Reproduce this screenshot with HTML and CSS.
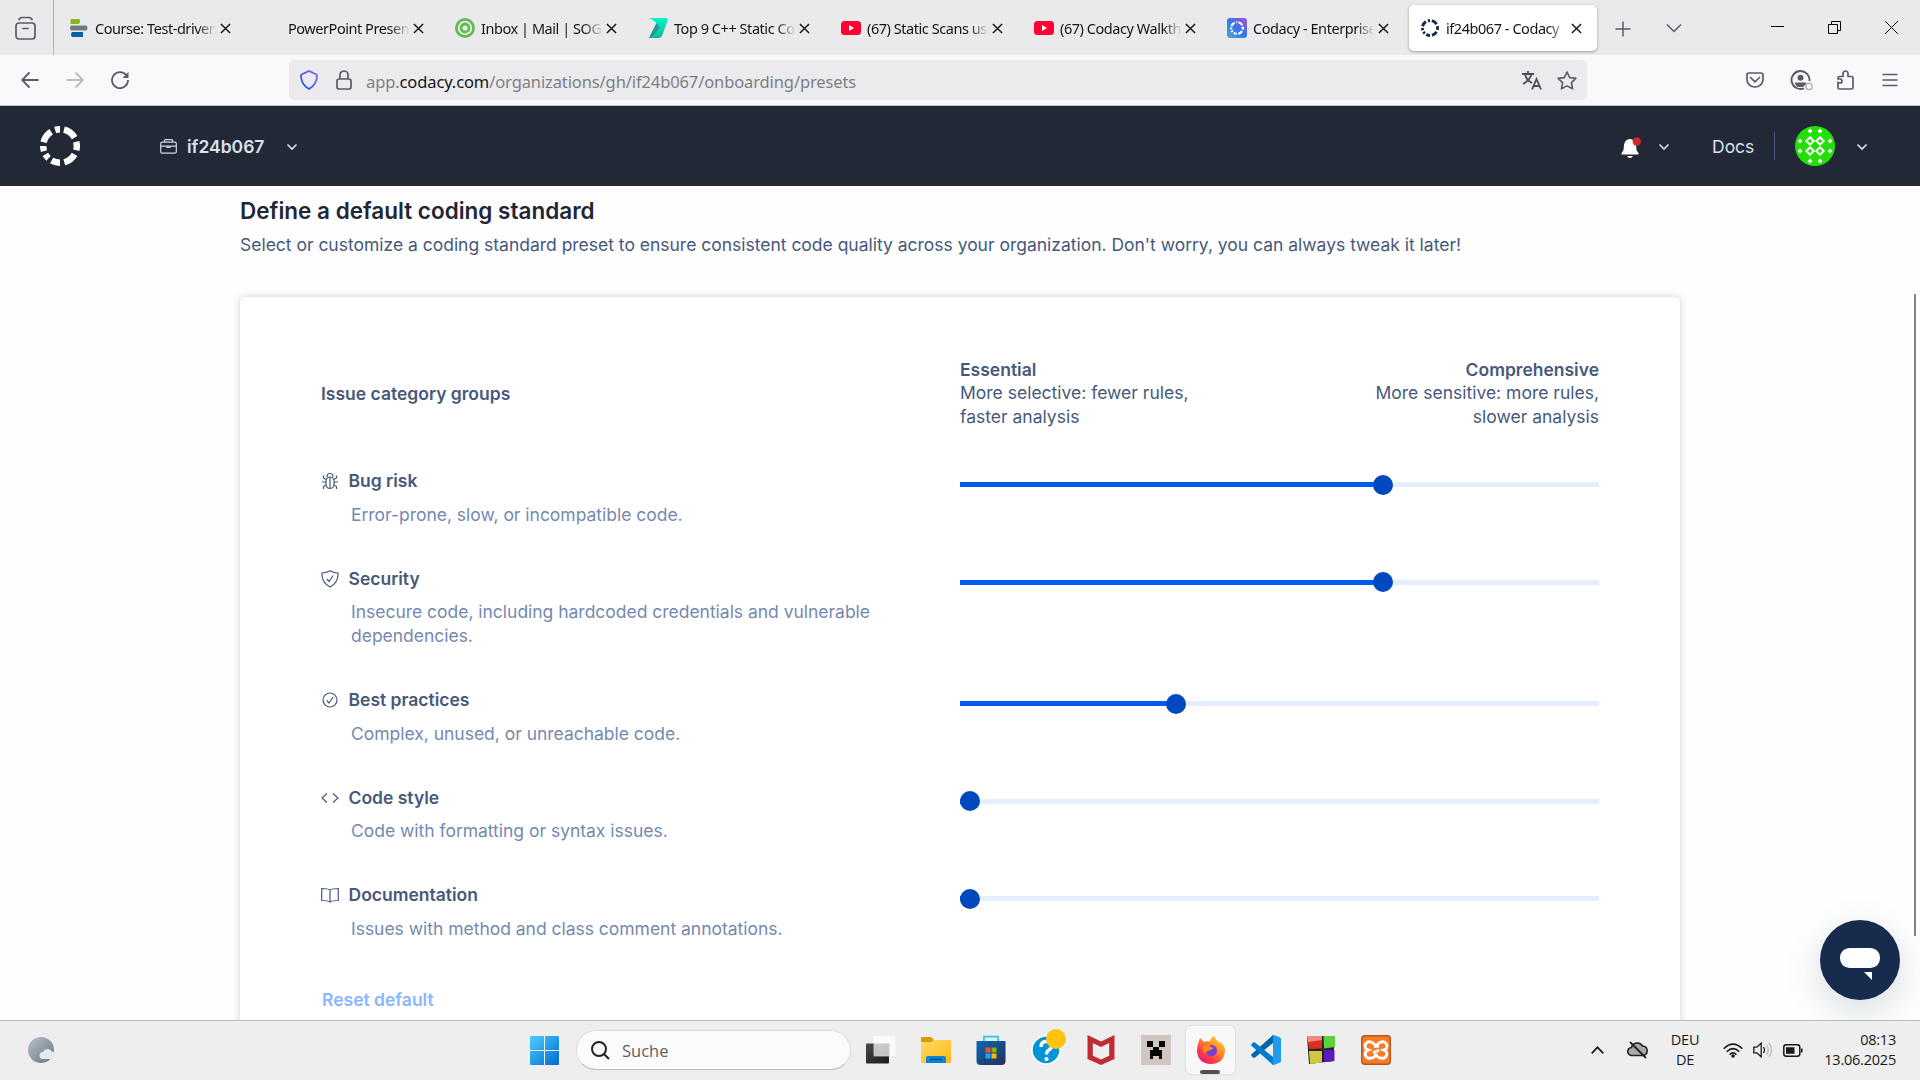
FILE: index.html
```html
<!DOCTYPE html>
<html lang="en">
<head>
<meta charset="utf-8">
<title>if24b067 - Codacy</title>
<link rel="stylesheet" href="styles.css">
</head>
<body>
<svg width="0" height="0" class="defs">
  <defs>
    <symbol id="ring" viewBox="0 0 40 40"><circle cx="20" cy="20" r="16.8" fill="none" stroke="currentColor" stroke-width="6.4" pathLength="360" stroke-dasharray="0 14 46 15 30 15 45 15 30 13 17 12 18 13 45 15 17" transform="rotate(-90 20 20)"/></symbol>
    <symbol id="x" viewBox="0 0 12 12"><path d="M1 1l10 10M11 1L1 11" stroke="currentColor" stroke-width="1.6" fill="none"/></symbol>
    <symbol id="down" viewBox="0 0 12 8"><path d="M1.5 1.5L6 6l4.500-4.500" stroke="currentColor" stroke-width="1.600" fill="none"/></symbol>
    <symbol id="yt" viewBox="0 0 20 20"><rect y="3" width="20" height="14" rx="3.500" fill="#ff0033"/><path d="M8 7l5 3-5 3z" fill="#fff"/></symbol>
    <linearGradient id="blue" x1="0" y1="0" x2="1" y2="1"><stop offset="0" stop-color="#4cd0ff"/><stop offset="1" stop-color="#0069cf"/></linearGradient>
    <linearGradient id="teal" x1="0" y1="0" x2="0" y2="1"><stop offset="0" stop-color="#00f5c4"/><stop offset="1" stop-color="#16b89a"/></linearGradient>
    <linearGradient id="cod" x1="1" y1="0" x2="0" y2="1"><stop offset="0" stop-color="#a352c8"/><stop offset=".5" stop-color="#3577f0"/><stop offset="1" stop-color="#48a8c8"/></linearGradient>
    <linearGradient id="shield" x1="1" y1="0" x2="0" y2="1"><stop offset="0" stop-color="#9059ff"/><stop offset="1" stop-color="#0250d8"/></linearGradient>
    <linearGradient id="store" x1="0" y1="0" x2="1" y2="1"><stop offset="0" stop-color="#0a67b5"/><stop offset="1" stop-color="#263058"/></linearGradient>
    <linearGradient id="folder" x1="0" y1="0" x2="1" y2="1"><stop offset="0" stop-color="#ffdc6a"/><stop offset="1" stop-color="#fdb813"/></linearGradient>
    <linearGradient id="fox" x1="1" y1="0" x2="0.200" y2="1"><stop offset="0" stop-color="#ffe63b"/><stop offset=".4" stop-color="#ff9322"/><stop offset=".75" stop-color="#ff3a46"/><stop offset="1" stop-color="#e0158a"/></linearGradient>
    <linearGradient id="moon" x1="0" y1="0" x2="1" y2="1"><stop offset="0" stop-color="#b6c3cf"/><stop offset="1" stop-color="#6c747c"/></linearGradient>
    <linearGradient id="dark" x1="0" y1="0" x2="1" y2="1"><stop offset="0" stop-color="#484848"/><stop offset="1" stop-color="#1c1c1c"/></linearGradient>
  </defs>
</svg>

<div class="tabbar">
  <div class="archive"><svg width="21" height="24" viewBox="0 0 21 24" fill="none" stroke="#5b5b66" stroke-width="1.700"><rect x="1" y="7" width="19" height="16" rx="3"/><path d="M4 3.500q1-2 3-2h7q2 0 3 2M8 12.500h5" stroke-linecap="round"/></svg></div>
  <div class="tabs">
    <div class="tab"><svg class="fav" viewBox="0 0 20 20"><path d="M2 1h8q1 0 1 2t-1 3H1q1-1 .500-2.500Q1 2 2 1z" fill="#84b819"/><path d="M2 7.500h15q1.500 0 1.500 2.500t-1.500 2.500H2q-2-2.500 0-5z" fill="#6f7c85"/><path d="M3 14h11v5H3q-2-2.500 0-5z" fill="#00659c"/></svg><span class="label">Course: Test-driven</span><svg class="close"><use href="#x"/></svg></div>
    <div class="tab"><span class="fav"></span><span class="label">PowerPoint Present</span><svg class="close"><use href="#x"/></svg></div>
    <div class="tab"><svg class="fav" viewBox="0 0 20 20" fill="none" stroke="#62bd4e"><circle cx="10" cy="10" r="8.600" stroke-width="2.800"/><circle cx="10" cy="10" r="4" stroke-width="2.800"/></svg><span class="label">Inbox | Mail | SOGo</span><svg class="close"><use href="#x"/></svg></div>
    <div class="tab"><svg class="fav" viewBox="0 0 20 20"><path d="M1 0h17q2 0 1.500 3L14 18q-1 2-3 2H1L8.500 5Q5 1.500 1 0z" fill="url(#teal)"/><path d="M8.500 5q3 2 3 5l-6 7-4.500 3z" fill="#2b8596" opacity=".75"/></svg><span class="label">Top 9 C++ Static Co</span><svg class="close"><use href="#x"/></svg></div>
    <div class="tab"><svg class="fav"><use href="#yt"/></svg><span class="label">(67) Static Scans usi</span><svg class="close"><use href="#x"/></svg></div>
    <div class="tab"><svg class="fav"><use href="#yt"/></svg><span class="label">(67) Codacy Walkth</span><svg class="close"><use href="#x"/></svg></div>
    <div class="tab"><svg class="fav" viewBox="0 0 20 20" color="#fff"><rect width="20" height="20" rx="3" fill="url(#cod)"/><use href="#ring" x="3" y="3" width="14" height="14"/></svg><span class="label">Codacy - Enterprise</span><svg class="close"><use href="#x"/></svg></div>
    <div class="tab active"><svg class="fav" viewBox="0 0 20 20" color="#172b4d"><use href="#ring" x="1" y="1" width="18" height="18"/></svg><span class="label">if24b067 - Codacy</span><svg class="close"><use href="#x"/></svg></div>
  </div>
  <div class="cell new"><svg width="16" height="16" viewBox="0 0 16 16" stroke="#5b5b66" stroke-width="1.500"><path d="M8 .5v15M.5 8h15"/></svg></div>
  <div class="cell list"><svg width="16" height="10" viewBox="0 0 16 10" fill="none" stroke="#5b5b66" stroke-width="1.500"><path d="M1 1.500l7 7 7-7"/></svg></div>
  <div class="wincontrols">
    <div class="cell"><svg width="13" height="13" viewBox="0 0 13 13"><path d="M0 5.500h13" stroke="#000"/></svg></div>
    <div class="cell"><svg width="13" height="13" viewBox="0 0 13 13" fill="none" stroke="#000"><path d="M.5 3.500h9v9h-9zM3.500 3.500v-3h9v9h-3"/></svg></div>
    <div class="cell"><svg width="13" height="13" viewBox="0 0 13 13" stroke="#000"><path d="M0 0l13 13M13 0L0 13"/></svg></div>
  </div>
</div>

<div class="toolbar">
  <div class="nav">
    <svg width="18" height="16" viewBox="0 0 18 16" fill="none" stroke="#5b5b66" stroke-width="1.800" stroke-linecap="round"><path d="M17 8H1.500M8 1L1.200 8 8 15"/></svg>
    <svg width="18" height="16" viewBox="0 0 18 16" fill="none" stroke="#bdbdc2" stroke-width="1.800" stroke-linecap="round"><path d="M1 8h15.500M10 1l6.800 7L10 15"/></svg>
    <svg width="18" height="18" viewBox="0 0 18 18" fill="none" stroke="#5b5b66" stroke-width="1.800"><path d="M15.500 4.500A8 8 0 1 0 17 9"/><path d="M17.500 1v6h-6z" fill="#5b5b66" stroke="none"/></svg>
  </div>
  <div class="urlbar">
    <svg width="18" height="20" viewBox="0 0 18 20" fill="none" stroke="url(#shield)" stroke-width="1.700"><path d="M9 1l7 3.200q1.200.6 1.100 1.800Q16.500 15 9 19 1.500 15 .9 6 .8 4.800 2 4.200z"/></svg>
    <svg class="lock" width="16" height="20" viewBox="0 0 16 20" fill="none" stroke="#5b5b66" stroke-width="1.700"><rect x="1" y="9" width="14" height="10" rx="2"/><path d="M4 9V5a4 4 0 0 1 8 0v4"/></svg>
    <span class="url">app.<b>codacy.com</b>/organizations/gh/if24b067/onboarding/presets</span>
    <svg width="20" height="19" viewBox="0 0 20 19" fill="none" stroke="#4d4d57" stroke-width="1.800"><path d="M0 3h12M6 0v3M3 3q1 6 7 9M9.500 3Q8 9 1 13M10 18.500L14.500 8 19 18.500M11.500 15h6"/></svg>
    <svg class="star" width="20" height="19" viewBox="0 0 20 19" fill="none" stroke="#5b5b66" stroke-width="1.600" stroke-linejoin="round"><path d="M10 1l2.700 5.600 6.200.8-4.500 4.200 1.200 6.200L10 14.900l-5.600 2.900 1.200-6.200L1.100 7.400l6.200-.8z"/></svg>
  </div>
  <div class="extras">
    <svg width="18" height="16" viewBox="0 0 18 16" fill="none" stroke="#5b5b66" stroke-width="1.700"><path d="M3 1h12q2 0 2 2v4.500a8 7.500 0 0 1-16 0V3q0-2 2-2z"/><path d="M4.500 5.500L9 9.800l4.500-4.300" stroke-linecap="round"/></svg>
    <svg width="23" height="21" viewBox="0 0 23 21" fill="none" stroke="#5b5b66" stroke-width="1.900"><path d="M14 18.300A9 9 0 1 1 19.500 11"/><circle cx="10.500" cy="7.800" r="3" fill="#5b5b66" stroke="none"/><path d="M5 12.500h11v1.500l-3 3H8q-3-1.500-3-4.500z" fill="#5b5b66" stroke="none"/><circle cx="19" cy="16.500" r="3.200" stroke="#b5b5ba" stroke-width="1.500"/></svg>
    <svg class="puzzle" width="17" height="20" viewBox="0 0 17 20" fill="none" stroke="#5b5b66" stroke-width="1.700" stroke-linejoin="round"><path d="M1 12v5.500Q1 19 2.500 19h12q1.500 0 1.500-1.500V8q0-1.500-1.500-1.500H11V3.500a2.500 2.500 0 0 0-5 0v3H2.500Q1 6.500 1 8v1h2a2 2 0 0 1 0 4H1z"/></svg>
    <svg width="16" height="14" viewBox="0 0 16 14" stroke="#5b5b66" stroke-width="1.600"><path d="M.5 1.500h15M.5 7h15M.5 12.500h15"/></svg>
  </div>
</div>

<header class="header">
  <svg class="logo"><use href="#ring"/></svg>
  <svg class="case" width="17" height="15" viewBox="0 0 17 15" fill="none" stroke="#cfd7e6" stroke-width="1.200"><rect x=".7" y="3.200" width="15.600" height="11" rx="1.500"/><path d="M4.500 3V1.500Q4.500.7 5.500.7h6q1 0 1 .8V3M.7 7.200h15.600M7 7.200v1.300h3V7.200"/></svg>
  <span class="org">if24b067</span>
  <svg class="chev"><use href="#down"/></svg>
  <span class="spacer"></span>
  <svg class="bell" width="21" height="21" viewBox="0 0 21 21"><path d="M9 2q5 .5 6 6 .3 5 1 6l1.500 2v1.500H.5V16L2 14q.7-1 1-6 .8-5.500 6-6zM6 19h6q-1 2-3 2t-3-2z" fill="#fff"/><circle cx="15.800" cy="4.500" r="4.200" fill="#cf2a2a"/></svg>
  <svg class="chev"><use href="#down"/></svg>
  <span class="docs">Docs</span>
  <svg class="avatar" viewBox="0 0 40 40"><circle cx="20" cy="20" r="20" fill="#22e006"/><path d="M15 2.500L17.500 5 15 7.500 12.500 5zM25 2.500L27.500 5 25 7.500 22.500 5zM5 12.500L7.500 15 5 17.500 2.500 15zM35 12.500l2.500 2.500-2.500 2.500-2.500-2.500zM5 22.500L7.500 25 5 27.500 2.500 25zM35 22.500l2.500 2.500-2.500 2.500-2.500-2.500zM15 32.500l2.500 2.500-2.500 2.500-2.500-2.500zM25 32.500l2.500 2.500-2.500 2.500-2.500-2.500z" fill="#fff"/><path d="M15 11.300l3.700 3.700-3.700 3.700-3.700-3.700zM25 11.300l3.700 3.700-3.700 3.700-3.700-3.700zM15 21.300l3.700 3.700-3.700 3.700-3.700-3.700zM25 21.300l3.700 3.700-3.700 3.700-3.700-3.700z" fill="none" stroke="#fff" stroke-width="2"/></svg>
  <svg class="chev last"><use href="#down"/></svg>
</header>

<main class="page">
  <h1>Define a default coding standard</h1>
  <p class="lead">Select or customize a coding standard preset to ensure consistent code quality across your organization. Don't worry, you can always tweak it later!</p>
  <section class="card">
    <div class="row head">
      <strong class="groups">Issue category groups</strong>
      <div class="ends">
        <p><strong>Essential</strong><br>More selective: fewer rules,<br>faster analysis</p>
        <p class="right"><strong>Comprehensive</strong><br>More sensitive: more rules,<br>slower analysis</p>
      </div>
    </div>
    <div class="row">
      <div class="info">
        <h2><svg viewBox="0 0 18 18"><rect x="5" y="5" width="8" height="11.500" rx="4"/><path d="M6 5q0-3.500 3-3.500T12 5M9 5v11M1 10h4M13 10h4M2.500 3.500V6L5 7.500M15.500 3.500V6L13 7.500M2.500 17v-2.500L5 13M15.500 17v-2.500L13 13"/></svg>Bug risk</h2>
        <p>Error-prone, slow, or incompatible code.</p>
      </div>
      <div class="slider"><div class="fill" style="width:66.150%"></div><div class="thumb"></div></div>
    </div>
    <div class="row">
      <div class="info">
        <h2><svg viewBox="0 0 18 18"><path d="M9 .8Q12.500 3 17 3q.5 10-8 14Q.5 13 1 3q4.500 0 8-2.200zM5.800 9l2.300 2.500 4-6"/></svg>Security</h2>
        <p>Insecure code, including hardcoded credentials and vulnerable dependencies.</p>
      </div>
      <div class="slider"><div class="fill" style="width:66.150%"></div><div class="thumb"></div></div>
    </div>
    <div class="row">
      <div class="info">
        <h2><svg viewBox="0 0 18 18"><circle cx="9" cy="9" r="7"/><path d="M5.800 9.500L8 12l4-6"/></svg>Best practices</h2>
        <p>Complex, unused, or unreachable code.</p>
      </div>
      <div class="slider"><div class="fill" style="width:33.800%"></div><div class="thumb"></div></div>
    </div>
    <div class="row">
      <div class="info">
        <h2><svg viewBox="0 0 18 18"><path d="M6 4.500L1 9l5 4.500M12 4.500L17 9l-5 4.500"/></svg>Code style</h2>
        <p>Code with formatting or syntax issues.</p>
      </div>
      <div class="slider"><div class="fill" style="width:1.560%"></div><div class="thumb"></div></div>
    </div>
    <div class="row">
      <div class="info">
        <h2><svg viewBox="0 0 18 18"><path d="M9 4Q7 2.500.7 2.500v12Q7 14.500 9 16q2-1.500 8.300-1.500v-12Q11 2.500 9 4zM9 4v12.500"/></svg>Documentation</h2>
        <p>Issues with method and class comment annotations.</p>
      </div>
      <div class="slider"><div class="fill" style="width:1.560%"></div><div class="thumb"></div></div>
    </div>
    <div class="reset">Reset default</div>
  </section>
  <div class="scrollbar"></div>
  <div class="chat"><svg width="40" height="32" viewBox="0 0 40 32" fill="#fff"><rect width="40" height="20" rx="9.500"/><path d="M24 24h8v8z"/></svg></div>
</main>

<footer class="taskbar">
  <svg class="weather" width="28" height="26" viewBox="0 0 28 26"><circle cx="13" cy="13" r="13" fill="url(#moon)"/><path d="M15 22a3.500 3.500 0 0 1 0-7 5 5 0 0 1 9-.5 3.800 3.800 0 0 1 0 7.500z" fill="#e3e9ee"/></svg>
  <svg class="start" width="29" height="29" viewBox="0 0 29 29" fill="url(#blue)"><path d="M1 0h13v14H0V1q0-1 1-1zM15 0h13q1 0 1 1v13H15zM0 15h14v14H1q-1 0-1-1zM15 15h14v13q0 1-1 1H15z"/></svg>
  <div class="search"><svg width="19" height="19" viewBox="0 0 19 19" fill="none" stroke="#222" stroke-width="2"><circle cx="8" cy="8" r="7"/><path d="M13 13l5 5"/></svg><span>Suche</span></div>
  <div class="apps">
    <div class="app"><svg viewBox="0 0 30 30"><rect y="8.500" width="23" height="20" rx="1" fill="url(#dark)"/><rect x="7.500" y="1" width="22" height="20" rx="1" fill="#fff" opacity=".72"/><path d="M23 8.500V21H7.500" fill="none" stroke="#ccc" stroke-width=".8"/></svg></div>
    <div class="app"><svg viewBox="0 0 30 30"><path d="M0 3q0-1 1-1h9l3 3v5H0z" fill="#dd9a00"/><path d="M0 7h10l3-2h16q1 0 1 1v21q0 1-1 1H1q-1 0-1-1z" fill="url(#folder)"/><path d="M5 28v-5q0-2 2-2h16q2 0 2 2v5z" fill="#0f84d2"/><path d="M9 24.500h12" stroke="#0a4e94" stroke-width="1.300"/></svg></div>
    <div class="app"><svg viewBox="0 0 30 30"><path d="M8 7V1.700h14V7" fill="none" stroke="#2cc4f2" stroke-width="1.800"/><path d="M.5 6H29.500v20q0 4-4 4H4.500q-4 0-4-4z" fill="url(#store)"/><path d="M9.500 12.500h5v5h-5z" fill="#f25022"/><path d="M15.500 12.500h5v5h-5z" fill="#7fba00"/><path d="M9.500 18.500h5v5h-5z" fill="#1da7f0"/><path d="M15.500 18.500h5v5h-5z" fill="#ffb900"/></svg></div>
    <div class="app badge"><svg viewBox="0 0 30 30"><circle cx="15" cy="15" r="14" fill="#0095d9" stroke="#fff" stroke-width="1.500"/><path d="M10 12q0-5.500 5.200-5.500T20.500 11q0 2.500-2.800 4.200-2.200 1.300-2.200 4.300" fill="none" stroke="#fff" stroke-width="3.300"/><circle cx="15.500" cy="24" r="2.100" fill="#fff"/></svg></div>
    <div class="app"><svg viewBox="0 0 30 30"><path d="M1.500 0L15 6.500 28.500 0v24L15 30 1.500 24zM6.800 8v12.800L15 24.500l8.200-3.700V8L15 12z" fill="#c12c30" fill-rule="evenodd"/></svg></div>
    <div class="app"><svg viewBox="0 0 30 30"><path d="M0 0h30v30H0z" fill="#d1c5c1"/><path d="M6 6h6v6H6zM18 6h6v6h-6zM12 12h6v3h3v9h-3v-3h-6v3H9v-9h3z" fill="#000"/></svg></div>
    <div class="app current"><svg viewBox="0 0 30 30"><path d="M2.500 7.500L4 3l4 4q2-1 4-1l2 1q0-4 4.500-6 .5 4 4 5.500 1 1 1.500 2l.5-1.500Q29 11 29 16q-1 12.500-14 13Q2 28.500 1 16q0-5 1.500-8.500z" fill="url(#fox)"/><circle cx="15.500" cy="15.500" r="5.500" fill="#7041d8"/><path d="M7 11q5-2 8 1l3 1-4 2.500q-4 0-4 3Q5 17 7 11z" fill="#ff8a1f"/></svg></div>
    <div class="app"><svg viewBox="0 0 30 30"><path d="M22 0v8L4 22.500q-1 .5-2 0l-1.500-1.700q-.7-.8 0-1.600z" fill="#0065a9"/><path d="M22 30v-8L4 7.500q-1-.5-2 0L.5 9.200q-.7.8 0 1.600z" fill="#007acc"/><path d="M21 0q1-.3 2 0l6 2.500q1 .5 1 1.500v22q0 1-1 1.500L23 30q-1 .3-2 0l1-2V2z" fill="#1f9cf0"/></svg></div>
    <div class="app"><svg viewBox="0 0 30 30"><path d="M1 1l27 0v25L3 29z" fill="#222"/><path d="M1 1l15 0v12.500L3 14z" fill="#de2f27"/><path d="M1 1h15v4L2 7z" fill="#f08a80"/><path d="M17.500 1H29V12l-11 1.500z" fill="#5bd041"/><path d="M3 16h13v11.500L4 29z" fill="#cfc83d"/><path d="M18 15h10.500v11L18 27z" fill="#5a1bb8"/></svg></div>
    <div class="app"><svg viewBox="0 0 30 30"><rect x=".7" y=".7" width="28.600" height="28.600" rx="3" fill="#fb7a24" stroke="#b8561a" stroke-width="1.400"/><path d="M9.500 7a4 4 0 0 0-2.500 8 4 4 0 0 0 3 8q4 0 5-4 1 4 5 4a4 4 0 0 0 3-8 4 4 0 0 0-2.500-8q-2 0-4.500 3h-2q-2.500-3-4.500-3zM13 11.500l5-.5M12 18l6-3" fill="none" stroke="#fff" stroke-width="3"/></svg></div>
  </div>
  <div class="tray">
    <svg class="up" width="13" height="8" viewBox="0 0 13 8" fill="none" stroke="#1a1a1a" stroke-width="1.700"><path d="M.7 7.300l5.800-6 5.800 6"/></svg>
    <svg class="cloud" width="21" height="18" viewBox="0 0 21 18"><path d="M5 14.500a4 4 0 0 1-.5-8A6 6 0 0 1 15.500 5a4.800 4.800 0 0 1 .8 9.500z" fill="#aaa" stroke="#222" stroke-width="1.600"/><path d="M3 1l16 16" stroke="#222" stroke-width="1.800"/></svg>
    <div class="lang">DEU<br>DE</div>
    <svg class="wifi" width="20" height="15" viewBox="0 0 20 15" fill="none" stroke="#1a1a1a" stroke-width="1.500"><path d="M.7 5.800q9.300-9.300 18.600 0M3.700 8.800q6.300-6.300 12.600 0M6.600 11.600q3.400-3.400 6.800 0"/><circle cx="10" cy="13" r="1.800" fill="#1a1a1a" stroke="none"/></svg>
    <svg class="vol" width="20" height="16" viewBox="0 0 20 16" fill="none" stroke="#1a1a1a" stroke-width="1.300"><path d="M.8 5.200h3L8.200 1.200v13.600l-4.400-4h-3zM10.500 5q2 3 0 6"/><path d="M13.500 3q3.500 5 0 10M16 .8q5 7.200 0 14.400" stroke="#bbb"/></svg>
    <svg class="bat" width="20" height="13" viewBox="0 0 20 13" fill="none" stroke="#1a1a1a" stroke-width="1.500"><rect x=".8" y=".8" width="16" height="11.400" rx="2.500"/><path d="M3 3.200h8.500v6.600H3zM18 4.500h1.500v4H18z" fill="#1a1a1a" stroke="none"/></svg>
    <div class="clock">08:13<br>13.06.2025</div>
  </div>
</footer>
</body>
</html>
```
FILE: styles.css
```css
* { box-sizing: border-box; }
body {
  margin: 0;
  width: 1920px;
  height: 1080px;
  overflow: hidden;
  display: flex;
  flex-direction: column;
  font-family: Inter, sans-serif;
  font-size: 17.500px;
  color: #47597b;
  background: #fff;
}
svg { display: block; flex: none; }
p, h1, h2 { margin: 0; }
.defs { position: absolute; }
.cell { display: flex; align-items: center; justify-content: center; }

/* Browser tabs */
.tabbar {
  height: 55px;
  flex: none;
  display: flex;
  background: #eaeaec;
  color: #15141a;
  font-family: "Noto Sans", "Open Sans", sans-serif;
}
.archive {
  width: 54px;
  padding-left: 15px;
  display: flex;
  align-items: center;
  border-right: 1px solid #b4b4b8;
}
.tabs { display: flex; gap: 5px; padding: 5px 0 4px 4px; }
.tab {
  width: 188px;
  height: 46px;
  padding-left: 11px;
  display: flex;
  align-items: center;
  border-radius: 5px;
}
.tab.active { background: #fff; box-shadow: 0 1px 3px rgba(0, 0, 0, .35); }
.fav { width: 20px; height: 20px; flex: none; }
.label {
  width: 122px;
  margin-left: 6px;
  overflow: hidden;
  white-space: nowrap;
  font-size: 14.500px;
  letter-spacing: -.45px;
  line-height: 24px;
  -webkit-mask-image: linear-gradient(to right, #000 84%, transparent);
  mask-image: linear-gradient(to right, #000 84%, transparent);
}
.close { width: 11px; height: 11px; margin-left: 3px; }
.new { width: 52px; margin-top: 2px; }
.list { width: 49px; }
.wincontrols { display: flex; margin-left: auto; }
.wincontrols .cell { width: 57px; }

/* Navigation toolbar */
.toolbar {
  height: 51px;
  flex: none;
  display: flex;
  align-items: center;
  background: #f9f9fb;
  border-bottom: 1px solid #c5c5c9;
}
.nav { width: 289px; padding-left: 21px; display: flex; align-items: center; gap: 27px; }
.urlbar {
  width: 1298px;
  height: 40px;
  padding: 0 10px 0 11px;
  display: flex;
  align-items: center;
  border-radius: 5px;
  background: #ebebed;
}
.lock { margin-left: 18px; }
.url {
  flex: 1;
  margin-left: 14px;
  padding-top: 3px;
  font-family: "Noto Sans", "Open Sans", sans-serif;
  font-size: 16.500px;
  letter-spacing: -.110px;
  color: #7e7e85;
}
.url b { font-weight: 400; color: #15141a; }
.star { margin-left: 15px; }
.extras { flex: 1; padding: 0 22px 0 159px; display: flex; align-items: center; justify-content: space-between; }
.puzzle { margin: 0 2px 0 -2px; }

/* Application header */
.header {
  height: 80px;
  flex: none;
  padding-left: 40px;
  display: flex;
  align-items: center;
  background: #222836;
  color: #d9e1f0;
}
.logo { width: 40px; height: 40px; color: #fff; }
.case { margin-left: 80px; }
.org { width: 99px; margin-left: 10px; font-weight: 600; }
.chev { width: 12px; height: 8px; margin-top: 2px; }
.spacer { flex: 1; }
.bell { margin-right: 16px; margin-top: 3px; }
.docs {
  height: 28px;
  width: 63px;
  margin-left: 42px;
  border-right: 1px solid #465980;
  line-height: 29px;
}
.avatar { width: 40px; height: 40px; margin-left: 20px; }
.last { margin: 2px 52px 0 21px; }

/* Page */
.page {
  position: relative;
  flex: 1;
  min-height: 0;
  overflow: hidden;
  padding: 10px 240px 0;
  background: #fefefe;
}
h1 {
  font-size: 22.500px;
  line-height: 30px;
  font-weight: 600;
  color: #1f2636;
}
.lead { margin-top: 7px; line-height: 24px; white-space: nowrap; letter-spacing: -.013px; }
.card {
  margin-top: 40px;
  height: 800px;
  padding: 61px 81px 0;
  background: #fff;
  border-radius: 5px;
  box-shadow: 0 0 6px 1px rgba(60, 75, 125, .2);
}
.row { display: grid; grid-template-columns: 639px 639px; margin-bottom: 30px; line-height: 24px; }
.row.head { height: 72px; margin-bottom: 39px; align-items: center; }
.ends { display: flex; justify-content: space-between; margin-top: -2px; line-height: 23.600px; }
.right { text-align: right; }
strong { font-weight: 600; }
.info h2 {
  display: flex;
  align-items: center;
  gap: 9.500px;
  font-size: 17.500px;
  line-height: 24px;
  font-weight: 600;
}
.info h2 svg {
  width: 18px;
  height: 18px;
  fill: none;
  stroke: #47597b;
  stroke-width: 1.200;
}
.info p { width: 540px; margin: 9.500px 0 0 30px; padding-bottom: 10px; color: #7589b0; letter-spacing: -.020px; }
.slider { height: 5px; margin-top: 13px; display: flex; align-items: center; background: #e4eeff; }
.fill { height: 5px; background: #005cf0; }
.thumb { width: 20px; height: 20px; margin-left: -10px; border-radius: 50%; background: #0048bd; flex: none; }
.reset { margin-top: 37px; padding-left: 1px; line-height: 24px; font-weight: 600; color: #8ab6ff; }
.scrollbar { position: absolute; right: 4px; top: 108px; width: 2px; height: 642px; background: #858585; }
.chat {
  position: absolute;
  right: 20px;
  bottom: 20px;
  width: 80px;
  height: 80px;
  padding: 28px 20px;
  border-radius: 50%;
  background: #172b4d;
  box-shadow: 0 12px 36px rgba(50, 90, 90, .2);
}

/* Windows taskbar */
.taskbar {
  height: 60px;
  flex: none;
  padding-bottom: 1px;
  display: flex;
  align-items: center;
  background: #eeeeee;
  border-top: 1px solid #b9b9b9;
  font-family: "Open Sans", "Noto Sans", sans-serif;
  color: #1a1a1a;
}
.weather { margin-left: 28px; }
.start { margin-left: 474px; }
.search {
  width: 275px;
  height: 40px;
  margin-left: 17px;
  padding-left: 14px;
  display: flex;
  align-items: center;
  gap: 12px;
  border: 1px solid #dcdcdc;
  border-bottom-color: #bebebe;
  border-radius: 20px;
  background: #fbfbfb;
  font-size: 16.500px;
  color: #606060;
}
.apps { display: flex; margin-left: 2px; }
.app { width: 55px; height: 48px; display: flex; align-items: center; justify-content: center; }
.app svg { width: 30px; height: 30px; }
.badge { position: relative; }
.badge::after {
  content: "";
  position: absolute;
  left: 28px;
  top: 3px;
  width: 20px;
  height: 20px;
  border-radius: 50%;
  background: #ffc20e;
}
.current {
  position: relative;
  width: 49px;
  margin: 0 3px;
  border-radius: 5px;
  background: #f8f8f8;
  box-shadow: 0 0 2px rgba(0, 0, 0, .2);
}
.current::after {
  content: "";
  position: absolute;
  left: 14px;
  bottom: 0;
  width: 20px;
  height: 4px;
  border-radius: 2px;
  background: #505050;
}
.tray { margin-left: auto; padding-right: 24px; display: flex; align-items: center; font-size: 14.500px; line-height: 20px; letter-spacing: -.220px; }
.cloud { margin-left: 23px; }
.lang { width: 40px; margin-left: 17px; text-align: center; }
.wifi { margin-left: 18px; }
.vol { margin-left: 10px; }
.bat { margin-left: 10px; }
.clock { width: 93px; text-align: right; }
```
